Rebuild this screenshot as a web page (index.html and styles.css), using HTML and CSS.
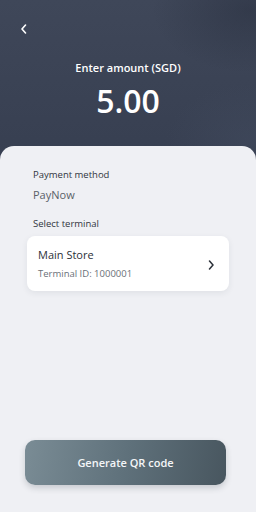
FILE: index.html
```html
<!DOCTYPE html>
<html>
<head>
<meta charset="utf-8">
<link rel="stylesheet" href="styles.css">
</head>
<body>
<div class="screen">
  <header class="top">
    <div class="nav">
      <svg class="back" width="8" height="10" viewBox="0 0 8 10"><path d="M5.5 1 L2 5 L5.5 9" fill="none" stroke="#fff" stroke-width="1.6" stroke-linecap="round" stroke-linejoin="round"/></svg>
    </div>
    <div class="label">Enter amount (SGD)</div>
    <div class="amount">5.00</div>
  </header>
  <main class="panel">
    <div class="section">
      <div class="title">Payment method</div>
      <div class="value">PayNow</div>
    </div>
    <div class="title sel">Select terminal</div>
    <div class="card">
      <div class="info">
        <div class="store">Main Store</div>
        <div class="tid">Terminal ID: 1000001</div>
      </div>
      <svg class="chev" width="8" height="10" viewBox="0 0 8 10"><path d="M2.5 1 L6 5 L2.5 9" fill="none" stroke="#2b3038" stroke-width="1.5" stroke-linecap="round" stroke-linejoin="round"/></svg>
    </div>
    <div class="spacer"></div>
    <button class="cta">Generate QR code</button>
  </main>
</div>
</body>
</html>
```
FILE: styles.css
```css
* { box-sizing: border-box; }
html, body { margin: 0; padding: 0; }
body { font-family: "Open Sans", "Noto Sans", sans-serif; background: #eff0f4; }
.screen { width: 256px; height: 512px; display: flex; flex-direction: column; background: #3a4254; overflow: hidden; }
.top {
  height: 160px;
  flex: none;
  background:
    radial-gradient(ellipse 140px 90px at 250px 10px, rgba(30,36,50,0.35), rgba(30,36,50,0) 70%),
    radial-gradient(ellipse 120px 80px at 250px 140px, rgba(70,80,100,0.35), rgba(70,80,100,0) 70%),
    linear-gradient(180deg, #3f4759 0%, #373f51 100%);
  color: #fff;
  display: flex;
  flex-direction: column;
  align-items: center;
}
.nav { align-self: stretch; padding: 24px 0 0 20px; height: 52px; }
.back { display: block; }
.label { font-size: 11px; font-weight: 600; line-height: 15px; margin-top: 8px; }
.amount { font-size: 32px; font-weight: 600; line-height: 40px; margin-top: 6px; }
.panel {
  flex: 1;
  margin-top: -14px;
  background: #eff0f4;
  border-radius: 14px 14px 0 0;
  padding: 22px 25px 27px 25px;
  display: flex;
  flex-direction: column;
}
.section { padding-left: 8px; }
.title { font-size: 9.5px; color: #2f3540; line-height: 13px; }
.value { font-size: 11px; color: #5a6068; margin-top: 6px; line-height: 15px; }
.sel { padding-left: 8px; margin-top: 15px; }
.card {
  margin: 6px 2px 0 2px;
  background: #fff;
  border-radius: 8px;
  height: 55px;
  box-shadow: 0 2px 6px rgba(40,50,70,0.08);
  display: flex;
  align-items: center;
  padding: 0 14px 0 11px;
}
.info { flex: 1; }
.store { font-size: 11px; color: #2b3038; line-height: 15px; }
.tid { font-size: 9.5px; color: #6a7078; margin-top: 5px; line-height: 13px; }
.chev { display: block; margin-top: 2px; }
.spacer { flex: 1; }
.cta {
  height: 45px;
  width: 201px;
  border: none;
  border-radius: 10px;
  background: linear-gradient(100deg, #7a8c95 0%, #5f717b 50%, #48565f 100%);
  color: #f4f6f8;
  font-family: inherit;
  font-size: 11px;
  font-weight: 600;
  box-shadow: 0 3px 6px rgba(40,50,60,0.2);
}
```
